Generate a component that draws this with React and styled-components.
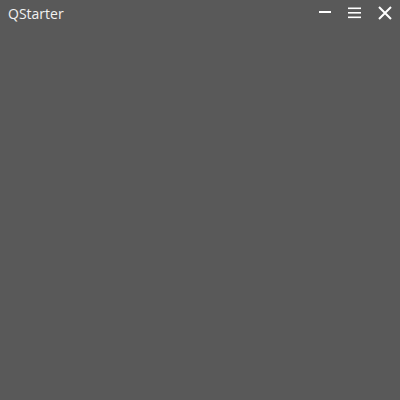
import styled, { createGlobalStyle } from "styled-components";

const GlobalStyle = createGlobalStyle`
  html, body {
    margin: 0;
    padding: 0;
    background: #595959;
  }
  #root {
    height: 400px;
  }
`;

const Window = styled.div`
  display: flex;
  flex-direction: column;
  width: 400px;
  height: 400px;
  background: #595959;
  font-family: "Open Sans", "Noto Sans", sans-serif;
`;

const TitleBar = styled.div`
  display: flex;
  align-items: center;
  justify-content: space-between;
  height: 28px;
  padding: 0 0 0 8px;
`;

const Title = styled.span`
  color: #f2f2f2;
  font-size: 14px;
  line-height: 28px;
  margin-top: -1px;
`;

const Controls = styled.div`
  display: flex;
  align-items: center;
  height: 100%;
`;

const ControlButton = styled.button`
  display: flex;
  align-items: center;
  justify-content: center;
  width: 30px;
  height: 26px;
  padding: 0;
  margin: 0;
  border: none;
  background: transparent;
  color: #ffffff;
  cursor: pointer;
  align-self: flex-start;
`;

const Content = styled.div`
  flex: 1;
`;

const App = () => {
  return (
    <>
      <GlobalStyle />
      <Window>
        <TitleBar>
          <Title>QStarter</Title>
          <Controls>
            <ControlButton aria-label="minimize">
              <svg width="30" height="26" viewBox="0 0 30 26">
                <rect x="9" y="11" width="12" height="2" fill="#fff" />
              </svg>
            </ControlButton>
            <ControlButton aria-label="menu">
              <svg width="30" height="26" viewBox="0 0 30 26">
                <rect x="8" y="7.5" width="13" height="1.6" fill="#fff" />
                <rect x="8" y="12" width="13" height="1.6" fill="#fff" />
                <rect x="8" y="16.5" width="13" height="1.6" fill="#fff" />
              </svg>
            </ControlButton>
            <ControlButton aria-label="close">
              <svg width="30" height="26" viewBox="0 0 30 26">
                <path
                  d="M9 7 L21 19 M21 7 L9 19"
                  stroke="#fff"
                  strokeWidth="2"
                  fill="none"
                />
              </svg>
            </ControlButton>
          </Controls>
        </TitleBar>
        <Content />
      </Window>
    </>
  );
};

export default App;
